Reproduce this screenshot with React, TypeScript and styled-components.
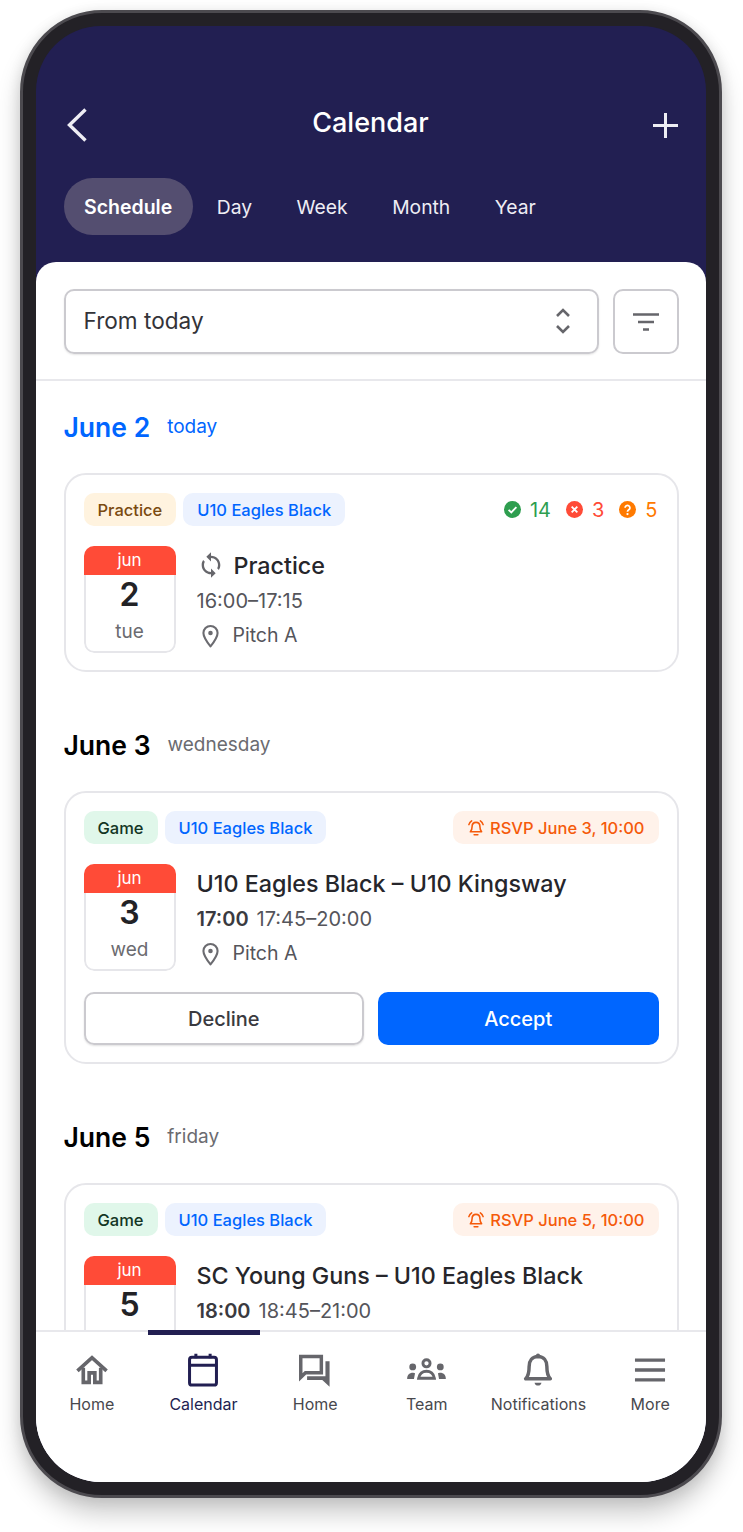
import React from "react";
import styled, { createGlobalStyle, css } from "styled-components";

const GlobalStyle = createGlobalStyle`
  html, body {
    margin: 0;
    padding: 0;
    background: #fff;
    font-family: "Inter", "Liberation Sans", sans-serif;
  }
  * {
    box-sizing: border-box;
  }
`;

const Stage = styled.div`
  width: 743px;
  height: 1532px;
  padding: 10px 21px 34px 20px;
  overflow: hidden;
  background: #fff;
`;

const Phone = styled.div`
  height: 1488px;
  padding: 13px;
  border: 3px solid #4c4a4f;
  border-radius: 82px;
  background: #232126;
  box-shadow: 0 16px 24px rgba(0, 0, 0, 0.2), 0 2px 14px rgba(0, 0, 0, 0.1);
`;

const Screen = styled.div`
  display: flex;
  flex-direction: column;
  height: 100%;
  overflow: hidden;
  border-radius: 65px;
  background: #221f52;
`;

const Header = styled.header`
  flex: none;
  height: 236px;
  padding: 74px 27.5px 0;
  color: #fff;
`;

const TitleRow = styled.div`
  display: flex;
  align-items: center;
  justify-content: space-between;
  height: 44px;
`;

const Title = styled.h1`
  margin: 0;
  font-size: 27px;
  font-weight: 500;
`;

const HeaderIcon = styled.svg`
  display: block;
  margin-top: 6px;
`;

const Tabs = styled.nav`
  display: flex;
  gap: 3.5px;
  margin-top: 34px;
`;

const Tab = styled.div<{ $active?: boolean }>`
  display: flex;
  align-items: center;
  height: 57px;
  padding: 0 20.5px;
  border-radius: 29px;
  font-size: 19.3px;
  color: #eeedf4;
  ${(p) =>
    p.$active &&
    css`
      background: #544e70;
      color: #fff;
      font-size: 19.5px;
      font-weight: 600;
    `}
`;

const Sheet = styled.main`
  flex: 1;
  min-height: 0;
  display: flex;
  flex-direction: column;
  border-radius: 20px 20px 0 0;
  background: #fff;
`;

const FilterBar = styled.div`
  flex: none;
  display: flex;
  gap: 14px;
  height: 119px;
  padding: 27px 27.5px 25px;
  border-bottom: 2px solid #e8e8ec;
`;

const Select = styled.div`
  flex: 1;
  display: flex;
  align-items: center;
  justify-content: space-between;
  padding: 0 26px 2px 18px;
  border: 2px solid #cbcacf;
  border-radius: 10px;
  font-size: 22.6px;
  color: #333338;
  box-shadow: 0 1px 2px rgba(0, 0, 0, 0.1);
`;

const FilterButton = styled.div`
  flex: none;
  display: flex;
  align-items: center;
  justify-content: center;
  width: 66px;
  border: 2px solid #cbcacf;
  border-radius: 10px;
`;

const List = styled.div`
  flex: 1;
  min-height: 0;
  overflow: hidden;
  padding: 26.5px 27.5px 0;
`;

const DayGroup = styled.section`
  margin-bottom: 53.5px;
`;

const DayHeading = styled.div<{ $today?: boolean }>`
  display: flex;
  align-items: center;
  gap: 17px;
  height: 38px;
  margin-bottom: 27.5px;
  color: ${(p) => (p.$today ? "#0066ff" : "#000")};
`;

const DayDate = styled.span`
  font-size: 26.5px;
  font-weight: 600;
  line-height: 38px;
`;

const DayName = styled.span<{ $today?: boolean }>`
  font-size: 19px;
  color: ${(p) => (p.$today ? "#0066ff" : "#6b6b70")};
`;

const Card = styled.article`
  padding: 18px 18px 17px;
  border: 2px solid #e6e6ea;
  border-radius: 22px;
`;

const TagRow = styled.div`
  display: flex;
  align-items: center;
  gap: 7px;
  height: 33px;
`;

const tagColors = {
  practice: "background: #fff3df; color: #7a4a10;",
  game: "background: #e0f7ea; color: #123524;",
  team: "background: #ecf2fe; color: #0066ff;",
  rsvp: "background: #fff2ea; color: #f55a0a;",
};

const Tag = styled.span<{ $kind: keyof typeof tagColors }>`
  display: flex;
  align-items: center;
  gap: 5px;
  height: 33px;
  padding: 0 14px;
  border-radius: 10px;
  font-size: 16.5px;
  font-weight: 500;
  ${(p) => tagColors[p.$kind]}
`;

const RsvpTag = styled(Tag)`
  margin-left: auto;
`;

const Counts = styled.div`
  display: flex;
  align-items: center;
  gap: 15px;
  margin-left: auto;
  padding-right: 1px;
`;

const Count = styled.span<{ $color: string }>`
  display: flex;
  align-items: center;
  gap: 9px;
  font-size: 20px;
  color: ${(p) => p.$color};
`;

const EventBody = styled.div`
  display: flex;
  gap: 21px;
  margin-top: 20px;
`;

const CalBox = styled.div`
  flex: none;
  width: 92px;
  height: 107px;
  overflow: hidden;
  border-radius: 10px;
  text-align: center;
`;

const CalMonth = styled.div`
  height: 29px;
  background: #ff4b37;
  color: #fff;
  font-size: 17px;
  line-height: 29px;
`;

const CalSheet = styled.div`
  height: 78px;
  border: 2px solid #e6e6ea;
  border-top: 0;
  border-radius: 0 0 10px 10px;
`;

const CalDay = styled.div`
  padding-top: 1px;
  font-size: 32px;
  font-weight: 600;
  line-height: 38px;
  color: #222226;
`;

const CalWeekday = styled.div`
  margin-top: 6px;
  font-size: 19px;
  line-height: 24px;
  color: #6b6b70;
`;

const EventInfo = styled.div`
  min-width: 0;
`;

const EventTitle = styled.div`
  display: flex;
  align-items: center;
  gap: 9px;
  height: 38px;
  font-size: 23.3px;
  font-weight: 550;
  color: #26262b;
  white-space: nowrap;
`;

const EventLine = styled.div`
  display: flex;
  align-items: center;
  gap: 8px;
  height: 34px;
  font-size: 20px;
  color: #55555b;
  white-space: nowrap;
`;

const PlaceLine = styled(EventLine)`
  font-size: 19.5px;
`;

const StartTime = styled.strong`
  font-weight: 600;
  color: #3a3a40;
`;

const IconSlot = styled.span`
  display: flex;
  justify-content: center;
  width: 28px;
`;

const Actions = styled.div`
  display: grid;
  grid-template-columns: 1fr 1fr;
  gap: 14px;
  margin-top: 21px;
`;

const ActionButton = styled.div<{ $primary?: boolean }>`
  display: flex;
  align-items: center;
  justify-content: center;
  height: 53px;
  border-radius: 10px;
  font-size: 20px;
  font-weight: 500;
  ${(p) =>
    p.$primary
      ? css`
          background: #0066ff;
          color: #fff;
        `
      : css`
          border: 2px solid #cbcacf;
          color: #3a3a40;
          box-shadow: 0 1px 2px rgba(0, 0, 0, 0.12);
        `}
`;

const BottomNav = styled.nav`
  position: relative;
  flex: none;
  display: grid;
  grid-template-columns: repeat(6, 1fr);
  height: 152px;
  border-top: 2px solid #e8e8ec;
  background: #fff;
`;

const ActiveBar = styled.div`
  position: absolute;
  top: -2px;
  left: 112px;
  width: 112px;
  height: 5px;
  background: #221f52;
`;

const NavItem = styled.div<{ $active?: boolean }>`
  display: flex;
  flex-direction: column;
  align-items: center;
  padding-top: 19px;
  font-size: 16px;
  color: ${(p) => (p.$active ? "#221f52" : "#48484d")};
`;

const NavIcon = styled.span`
  display: flex;
  align-items: center;
  justify-content: center;
  height: 38px;
  margin-bottom: 3px;
`;

const NavLabel = styled.span`
  line-height: 24px;
  white-space: nowrap;
`;

const Svg = ({ size, children }: { size: number; children: React.ReactNode }) => (
  <svg width={size} height={size} viewBox="0 0 24 24" fill="none" style={{ display: "block" }}>
    {children}
  </svg>
);

const PinIcon = () => (
  <Svg size={25}>
    <path d="M12 22.5C8 17.5 5.2 13.8 5.2 9.6a6.8 6.8 0 0 1 13.6 0c0 4.2-2.8 7.900-6.800 12.900z" stroke="#6b6b70" strokeWidth="2" strokeLinejoin="round" />
    <circle cx="12" cy="9.600" r="2.200" fill="#6b6b70" />
  </Svg>
);

const SyncIcon = () => (
  <Svg size={30}>
    <path
      d="M12 4V1L8 5l4 4V6c3.310 0 6 2.690 6 6 0 1.010-.250 1.970-.700 2.800l1.460 1.460C19.540 15.030 20 13.570 20 12c0-4.420-3.580-8-8-8zm0 14c-3.310 0-6-2.690-6-6 0-1.010.250-1.970.700-2.800L5.240 7.740C4.460 8.970 4 10.430 4 12c0 4.420 3.580 8 8 8v3l4-4-4-4v3z"
      fill="#66666b"
    />
  </Svg>
);

const StatusDot = ({ color, kind }: { color: string; kind: "yes" | "no" | "maybe" }) => (
  <Svg size={17}>
    <circle cx="12" cy="12" r="12" fill={color} />
    {kind === "yes" && <path d="M6.500 12.500l3.800 3.600 7.200-7.600" stroke="#fff" strokeWidth="2.600" />}
    {kind === "no" && <path d="M8 8l8 8M16 8l-8 8" stroke="#fff" strokeWidth="2.600" />}
    {kind === "maybe" && (
      <>
        <path d="M8.600 9.600a3.400 3.400 0 1 1 5.200 2.900c-1.300.8-1.800 1.300-1.800 2.600" stroke="#fff" strokeWidth="2.500" />
        <circle cx="12" cy="18.500" r="1.600" fill="#fff" />
      </>
    )}
  </Svg>
);

const AlarmIcon = () => (
  <Svg size={18}>
    <path d="M12 4.500c-3.400 0-5.200 2.600-5.200 5.600 0 3.600-.8 5.400-2.300 7h15c-1.500-1.600-2.300-3.400-2.300-7 0-3-1.800-5.600-5.200-5.600z" stroke="#f55a0a" strokeWidth="2.100" strokeLinejoin="round" />
    <path d="M9.500 21h5M2.500 7.500C3.200 5.400 4.400 3.800 6.200 2.600M21.500 7.500c-.7-2.100-1.900-3.700-3.700-4.900" stroke="#f55a0a" strokeWidth="2.100" strokeLinecap="round" />
  </Svg>
);

const Location = () => (
  <PlaceLine>
    <IconSlot>
      <PinIcon />
    </IconSlot>
    Pitch A
  </PlaceLine>
);

const DateTile = ({ day, weekday }: { day: number; weekday: string }) => (
  <CalBox>
    <CalMonth>jun</CalMonth>
    <CalSheet>
      <CalDay>{day}</CalDay>
      <CalWeekday>{weekday}</CalWeekday>
    </CalSheet>
  </CalBox>
);

const GameCard = ({
  day,
  weekday,
  rsvp,
  title,
  start,
  range,
  actions,
}: {
  day: number;
  weekday: string;
  rsvp: string;
  title: string;
  start: string;
  range: string;
  actions?: boolean;
}) => (
  <Card>
    <TagRow>
      <Tag $kind="game">Game</Tag>
      <Tag $kind="team">U10 Eagles Black</Tag>
      <RsvpTag $kind="rsvp">
        <AlarmIcon />
        {rsvp}
      </RsvpTag>
    </TagRow>
    <EventBody>
      <DateTile day={day} weekday={weekday} />
      <EventInfo>
        <EventTitle>{title}</EventTitle>
        <EventLine>
          <StartTime>{start}</StartTime>
          {range}
        </EventLine>
        <Location />
      </EventInfo>
    </EventBody>
    {actions && (
      <Actions>
        <ActionButton>Decline</ActionButton>
        <ActionButton $primary>Accept</ActionButton>
      </Actions>
    )}
  </Card>
);

const navStroke = "#66666b";

const navItems = [
  {
    label: "Home",
    icon: (
      <Svg size={38}>
        <path d="M2.800 12.600L12 4.200l9.200 8.400" stroke={navStroke} strokeWidth="2.300" />
        <path d="M6.500 10.500v9.300h3.700v-6h3.600v6h3.700v-9.300" stroke={navStroke} strokeWidth="2.300" />
      </Svg>
    ),
  },
  {
    label: "Calendar",
    active: true,
    icon: (
      <Svg size={38}>
        <rect x="3.500" y="4" width="17" height="17.500" rx="1.500" stroke="#221f52" strokeWidth="1.900" />
        <path d="M3.500 9h17M7.500 1.800V4.500M16.500 1.800V4.500" stroke="#221f52" strokeWidth="1.900" />
      </Svg>
    ),
  },
  {
    label: "Home",
    icon: (
      <Svg size={38}>
        <path d="M3 3.500h13v10.200H6L3 16.600z" stroke={navStroke} strokeWidth="2.200" />
        <path d="M18.600 6.500h2.600v16l-4.600-4.200H7v-2.400h11.600z" fill={navStroke} />
      </Svg>
    ),
  },
  {
    label: "Team",
    icon: (
      <Svg size={43}>
        <circle cx="12" cy="8" r="2" stroke={navStroke} strokeWidth="1.600" />
        <circle cx="4.300" cy="10" r="1.900" fill={navStroke} />
        <circle cx="19.700" cy="10" r="1.900" fill={navStroke} />
        <path d="M7.600 16.300c.4-2.600 2.300-3.900 4.400-3.900s4 1.300 4.400 3.900z" stroke={navStroke} strokeWidth="1.600" />
        <path d="M1.200 16.800c0-2 .9-3.500 3.400-3.500l1 .3-.6 3.200zM22.800 16.800c0-2-.9-3.500-3.400-3.500l-1 .3.600 3.200z" fill={navStroke} />
      </Svg>
    ),
  },
  {
    label: "Notifications",
    icon: (
      <Svg size={38}>
        <path d="M12 3.500c-3.700 0-5.600 2.800-5.600 6.300 0 4.200-.7 6.300-2.200 7.700h15.600c-1.500-1.400-2.200-3.500-2.200-7.700 0-3.500-1.900-6.300-5.600-6.300z" stroke={navStroke} strokeWidth="2.200" strokeLinejoin="round" />
        <circle cx="12" cy="2.800" r="1.300" fill={navStroke} />
        <path d="M9.800 20h4.400c-.3 1.200-1.100 1.800-2.200 1.800S10.100 21.200 9.800 20z" fill={navStroke} />
      </Svg>
    ),
  },
  {
    label: "More",
    icon: (
      <Svg size={38}>
        <path d="M2.500 5.800h19M2.500 12h19M2.500 18.200h19" stroke={navStroke} strokeWidth="2.100" />
      </Svg>
    ),
  },
];

export default function App() {
  return (
    <Stage>
      <GlobalStyle />
      <Phone>
        <Screen>
          <Header>
            <TitleRow>
              <HeaderIcon width="24" height="36" viewBox="0 0 24 36" fill="none">
                <path d="M21.500 2.500L5.500 18l16 15.500" stroke="#eeedf4" strokeWidth="3.400" />
              </HeaderIcon>
              <Title>Calendar</Title>
              <HeaderIcon width="25" height="25" viewBox="0 0 25 25" fill="none">
                <path d="M12.500 0v25M0 12.500h25" stroke="#eeedf4" strokeWidth="3" />
              </HeaderIcon>
            </TitleRow>
            <Tabs>
              <Tab $active>Schedule</Tab>
              <Tab>Day</Tab>
              <Tab>Week</Tab>
              <Tab>Month</Tab>
              <Tab>Year</Tab>
            </Tabs>
          </Header>
          <Sheet>
            <FilterBar>
              <Select>
                From today
                <svg width="16" height="28" viewBox="0 0 16 28" fill="none">
                  <path d="M2 9l6-6 6 6M2 19l6 6 6-6" stroke="#66666b" strokeWidth="2.600" />
                </svg>
              </Select>
              <FilterButton>
                <svg width="26" height="18" viewBox="0 0 26 18" fill="none">
                  <path d="M0 1.500h26M5 9h16M10 16.500h6" stroke="#66666b" strokeWidth="2.600" />
                </svg>
              </FilterButton>
            </FilterBar>
            <List>
              <DayGroup>
                <DayHeading $today>
                  <DayDate>June 2</DayDate>
                  <DayName $today>today</DayName>
                </DayHeading>
                <Card>
                  <TagRow>
                    <Tag $kind="practice">Practice</Tag>
                    <Tag $kind="team">U10 Eagles Black</Tag>
                    <Counts>
                      <Count $color="#2e9e4f">
                        <StatusDot color="#2e9e4f" kind="yes" />
                        14
                      </Count>
                      <Count $color="#ff4b37">
                        <StatusDot color="#ff4b37" kind="no" />3
                      </Count>
                      <Count $color="#ff7a00">
                        <StatusDot color="#ff7a00" kind="maybe" />5
                      </Count>
                    </Counts>
                  </TagRow>
                  <EventBody>
                    <DateTile day={2} weekday="tue" />
                    <EventInfo>
                      <EventTitle>
                        <IconSlot>
                          <SyncIcon />
                        </IconSlot>
                        Practice
                      </EventTitle>
                      <EventLine>16:00–17:15</EventLine>
                      <Location />
                    </EventInfo>
                  </EventBody>
                </Card>
              </DayGroup>
              <DayGroup>
                <DayHeading>
                  <DayDate>June 3</DayDate>
                  <DayName>wednesday</DayName>
                </DayHeading>
                <GameCard
                  day={3}
                  weekday="wed"
                  rsvp="RSVP June 3, 10:00"
                  title="U10 Eagles Black – U10 Kingsway"
                  start="17:00"
                  range="17:45–20:00"
                  actions
                />
              </DayGroup>
              <DayGroup>
                <DayHeading>
                  <DayDate>June 5</DayDate>
                  <DayName>friday</DayName>
                </DayHeading>
                <GameCard
                  day={5}
                  weekday="fri"
                  rsvp="RSVP June 5, 10:00"
                  title="SC Young Guns – U10 Eagles Black"
                  start="18:00"
                  range="18:45–21:00"
                />
              </DayGroup>
            </List>
            <BottomNav>
              <ActiveBar />
              {navItems.map((item, i) => (
                <NavItem key={i} $active={item.active}>
                  <NavIcon>{item.icon}</NavIcon>
                  <NavLabel>{item.label}</NavLabel>
                </NavItem>
              ))}
            </BottomNav>
          </Sheet>
        </Screen>
      </Phone>
    </Stage>
  );
}
